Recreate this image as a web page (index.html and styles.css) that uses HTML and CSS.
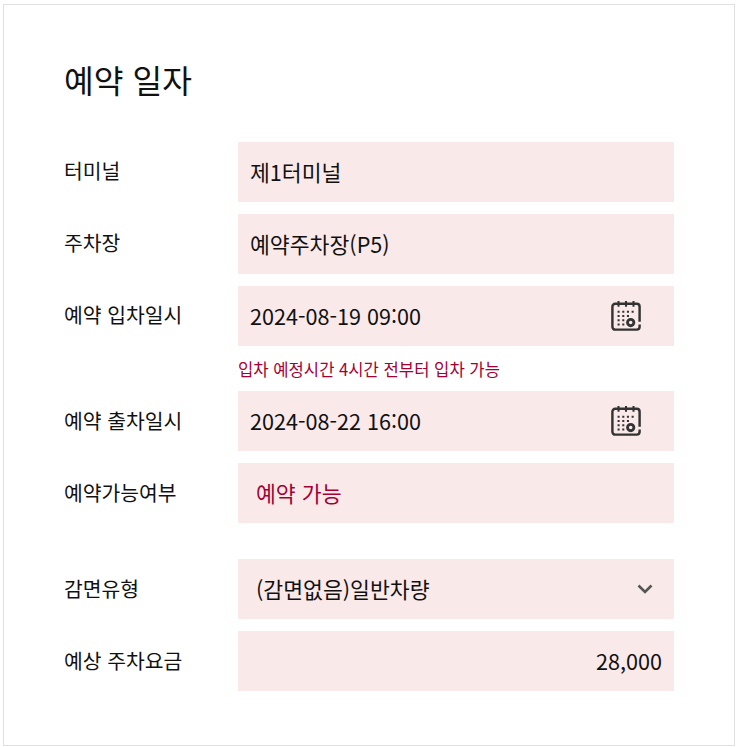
FILE: index.html
```html
<!DOCTYPE html>
<html lang="ko">

<head>
    <meta charset="UTF-8">
    <meta name="viewport" content="width=device-width, initial-scale=1.0">
    <title>예약 일자</title>
    <link rel="stylesheet" href="styles.css">
</head>

<body>
    <div class="card">
        <h2 class="title">예약 일자</h2>
        <div class="row">
            <div class="label">터미널</div>
            <div class="field">제1터미널</div>
        </div>
        <div class="row">
            <div class="label">주차장</div>
            <div class="field">예약주차장(P5)</div>
        </div>
        <div class="row">
            <div class="label">예약 입차일시</div>
            <div class="field date">
                <span>2024-08-19 09:00</span>
                <svg class="cal" viewBox="0 0 32 32" fill="none" stroke="#333" stroke-width="2.600">
                    <path d="M30.500 25v2.500a3 3 0 0 1-3 3H4.500a3 3 0 0 1-3-3V6a3 3 0 0 1 3-3h23a3 3 0 0 1 3 3v16" />
                    <path d="M8 0v6M16 0v6M24 0v6" stroke-width="2.200" />
                    <path d="M7 11.500h2.200M12 11.500h2.200M17 11.500h2.200M22 11.500h2.200M7 16h2.200M12 16h2.200M17 16h2.200M7 20.500h2.200M12 20.500h2.200M7 25h2.200M12 25h2.200" stroke-width="2" />
                    <circle cx="21" cy="23" r="3.400" stroke-width="3" />
                </svg>
            </div>
        </div>
        <p class="hint">입차 예정시간 4시간 전부터 입차 가능</p>
        <div class="row">
            <div class="label">예약 출차일시</div>
            <div class="field date">
                <span>2024-08-22 16:00</span>
                <svg class="cal" viewBox="0 0 32 32" fill="none" stroke="#333" stroke-width="2.600">
                    <path d="M30.500 25v2.500a3 3 0 0 1-3 3H4.500a3 3 0 0 1-3-3V6a3 3 0 0 1 3-3h23a3 3 0 0 1 3 3v16" />
                    <path d="M8 0v6M16 0v6M24 0v6" stroke-width="2.200" />
                    <path d="M7 11.500h2.200M12 11.500h2.200M17 11.500h2.200M22 11.500h2.200M7 16h2.200M12 16h2.200M17 16h2.200M7 20.500h2.200M12 20.500h2.200M7 25h2.200M12 25h2.200" stroke-width="2" />
                    <circle cx="21" cy="23" r="3.400" stroke-width="3" />
                </svg>
            </div>
        </div>
        <div class="row">
            <div class="label">예약가능여부</div>
            <div class="field status">예약 가능</div>
        </div>
        <div class="row gap-top">
            <div class="label">감면유형</div>
            <div class="field select">
                <span>(감면없음)일반차량</span>
                <svg class="arrow" viewBox="0 0 16 10" fill="none" stroke="#555" stroke-width="2.600">
                    <path d="M1.500 1.500 8 8l6.500-6.500" />
                </svg>
            </div>
        </div>
        <div class="row">
            <div class="label">예상 주차요금</div>
            <div class="field price">28,000</div>
        </div>
    </div>
</body>

</html>
```

FILE: styles.css
```css
* {
    margin: 0;
    padding: 0;
    box-sizing: border-box;
}

body {
    padding: 4px 3px 0;
    background: #fff;
    color: #111;
    font-family: "Noto Sans CJK KR", "Noto Sans", sans-serif;
}

.card {
    width: 732px;
    height: 742px;
    padding: 49px 60px 0;
    border: 1px solid #e0e0e0;
}

.title {
    height: 88px;
    font-size: 32.300px;
    font-weight: 400;
    line-height: 50px;
}

.row {
    display: flex;
    margin-bottom: 12px;
}

.row.gap-top {
    margin-top: 36px;
}

.label {
    width: 174px;
    font-size: 20.400px;
    line-height: 57px;
}

.hint ~ .row .label {
    line-height: 58px;
}

.field {
    display: flex;
    align-items: center;
    width: 436px;
    height: 60px;
    padding: 0 12px 2px;
    background: #f9e9e9;
    font-size: 21.600px;
}

.date {
    justify-content: space-between;
    padding-right: 33px;
}

.status {
    padding-left: 18px;
    color: #a50034;
}

.select {
    justify-content: space-between;
    padding-left: 18px;
    padding-right: 21px;
}

.price {
    justify-content: flex-end;
}

.hint {
    height: 33px;
    padding-left: 174px;
    color: #a50034;
    font-size: 16.640px;
    line-height: 22px;
}

.cal {
    width: 30px;
    height: 30px;
    margin-top: 2px;
}

.arrow {
    width: 16px;
    height: 10px;
    margin-top: 2px;
}
```
